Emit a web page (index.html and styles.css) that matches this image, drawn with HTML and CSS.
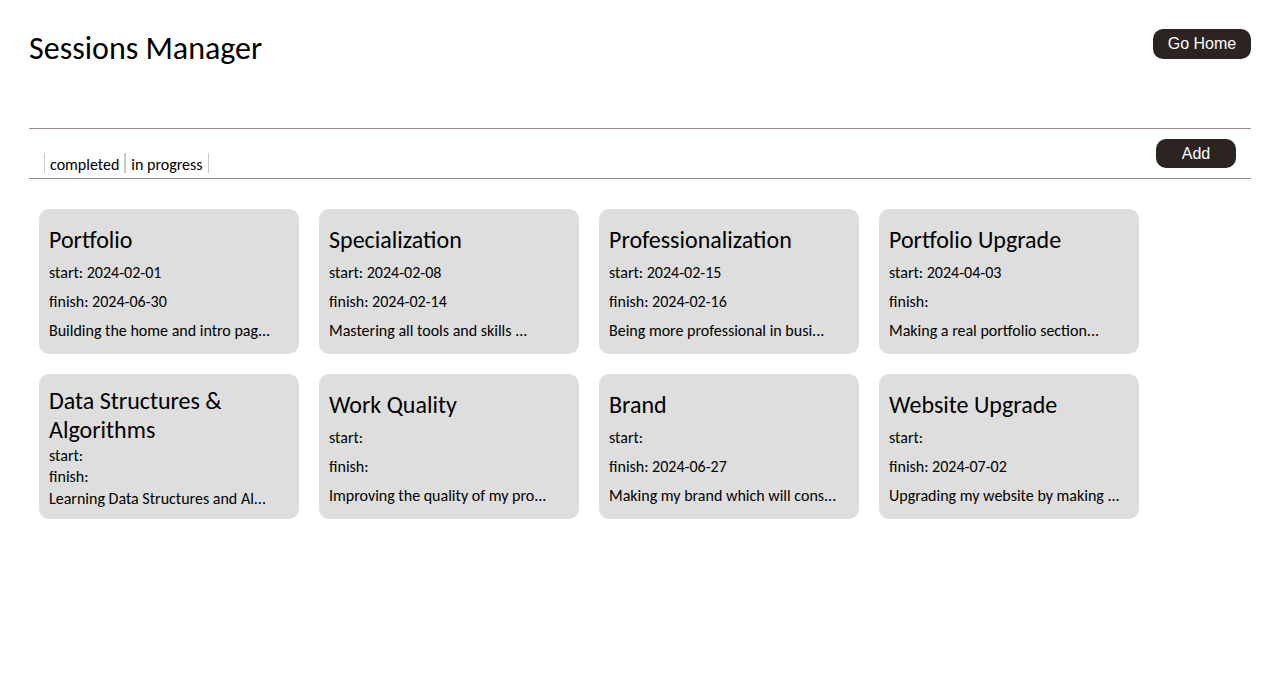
FILE: index.html
```html
<!DOCTYPE html>
<html lang="en">
<head>
<meta charset="utf-8">
<title>Sessions Manager</title>
<link rel="stylesheet" href="styles.css">
</head>
<body>
<div class="page">
  <header class="header">
    <h1 class="title">Sessions Manager</h1>
    <button class="btn btn-home">Go Home</button>
  </header>
  <nav class="toolbar">
    <ul class="filters">
      <li class="filter">completed</li>
      <li class="filter">in progress</li>
    </ul>
    <button class="btn btn-add">Add</button>
  </nav>
  <main class="cards">
    <article class="card">
      <h2 class="card-title">Portfolio</h2>
      <p class="card-line">start: 2024-02-01</p>
      <p class="card-line">finish: 2024-06-30</p>
      <p class="card-line">Building the home and intro pag...</p>
    </article>
    <article class="card">
      <h2 class="card-title">Specialization</h2>
      <p class="card-line">start: 2024-02-08</p>
      <p class="card-line">finish: 2024-02-14</p>
      <p class="card-line">Mastering all tools and skills ...</p>
    </article>
    <article class="card">
      <h2 class="card-title">Professionalization</h2>
      <p class="card-line">start: 2024-02-15</p>
      <p class="card-line">finish: 2024-02-16</p>
      <p class="card-line">Being more professional in busi...</p>
    </article>
    <article class="card">
      <h2 class="card-title">Portfolio Upgrade</h2>
      <p class="card-line">start: 2024-04-03</p>
      <p class="card-line">finish:</p>
      <p class="card-line">Making a real portfolio section...</p>
    </article>
    <article class="card">
      <h2 class="card-title">Data Structures &amp; Algorithms</h2>
      <p class="card-line">start:</p>
      <p class="card-line">finish:</p>
      <p class="card-line">Learning Data Structures and Al...</p>
    </article>
    <article class="card">
      <h2 class="card-title">Work Quality</h2>
      <p class="card-line">start:</p>
      <p class="card-line">finish:</p>
      <p class="card-line">Improving the quality of my pro...</p>
    </article>
    <article class="card">
      <h2 class="card-title">Brand</h2>
      <p class="card-line">start:</p>
      <p class="card-line">finish: 2024-06-27</p>
      <p class="card-line">Making my brand which will cons...</p>
    </article>
    <article class="card">
      <h2 class="card-title">Website Upgrade</h2>
      <p class="card-line">start:</p>
      <p class="card-line">finish: 2024-07-02</p>
      <p class="card-line">Upgrading my website by making ...</p>
    </article>
  </main>
</div>
</body>
</html>
```
FILE: styles.css
```css
* {
  box-sizing: border-box;
}

body {
  margin: 8px;
  background: #ffffff;
  color: #000000;
  font-family: Calibri, Carlito, Lato, "Noto Sans", sans-serif;
}

.page {
  padding: 0 21px;
}

.header {
  display: flex;
  justify-content: space-between;
  align-items: flex-start;
  padding-top: 21px;
  height: 121px;
  border-bottom: 1px solid #998a85;
}

.title {
  margin: 0;
  font-size: 32px;
  font-weight: normal;
  line-height: 39px;
}

.btn {
  font-family: "Liberation Sans", Arial, sans-serif;
  font-size: 16px;
  color: #ffffff;
  background: #2b2420;
  border: none;
  border-radius: 10px;
  height: 30px;
  cursor: pointer;
}

.btn-home {
  width: 98px;
  padding: 0;
}

.toolbar {
  display: flex;
  justify-content: space-between;
  align-items: center;
  height: 50px;
  padding: 0 15px;
  border-bottom: 1px solid #998a85;
}

.filters {
  display: flex;
  list-style: none;
  margin: 0 0 5px;
  padding: 0;
  align-self: flex-end;
}

.filter {
  font-size: 16px;
  line-height: 17px;
  padding: 3px 5px 0;
  border-left: 1px solid #c8c8c8;
  border-right: 1px solid #c8c8c8;
}

.btn-add {
  width: 80px;
  padding: 0;
  height: 29px;
}

.cards {
  display: flex;
  flex-wrap: wrap;
  gap: 20px;
  padding: 30px 10px;
}

.card {
  width: 260px;
  height: 145px;
  padding: 11px 10px 9px;
  background: #dedede;
  border-radius: 10px;
  display: flex;
  flex-direction: column;
  justify-content: space-around;
}

.card-title {
  margin: 0;
  font-size: 24px;
  font-weight: normal;
  line-height: 29px;
}

.card-line {
  margin: 0;
  font-size: 16px;
  line-height: 20px;
  white-space: nowrap;
  overflow: hidden;
}
```
